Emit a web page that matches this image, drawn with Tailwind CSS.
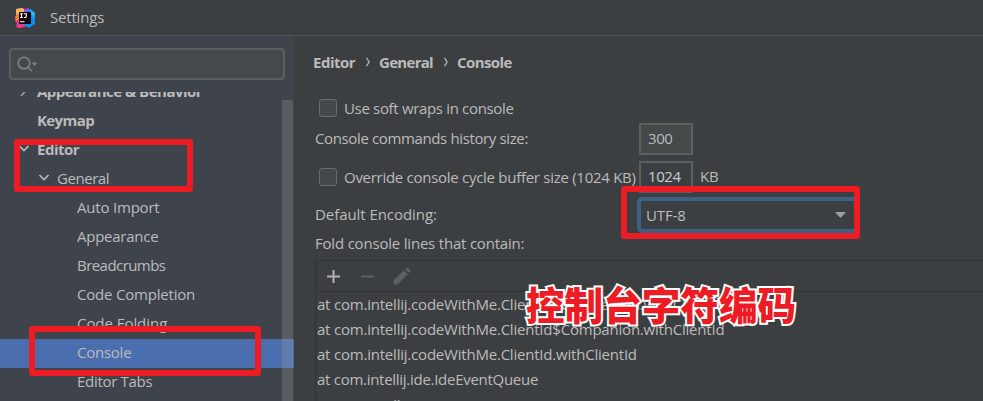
<!DOCTYPE html>
<html lang="en">
<head>
<meta charset="utf-8">
<title>Settings</title>
<script src="https://cdn.jsdelivr.net/npm/@tailwindcss/browser@4"></script>
</head>
<body class="relative flex h-[401px] w-[983px] flex-col overflow-hidden bg-[#3c3f41] font-['Open_Sans','Noto_Sans',sans-serif] text-[15px] leading-[20px] whitespace-nowrap text-[#bbbbbb]">

<header class="flex h-9 shrink-0 items-center border-b border-[#515456] pl-[15px]">
  <svg class="size-5" viewBox="0 0 20 20">
    <path d="M1 1 7 0l5 3-1 12-6 5-3-1 1-5-3-2 2-4Z" fill="#f8578b"/>
    <path d="M1 1 7 0l4 2-5 4-5 1Z" fill="#f5b45c"/>
    <path d="M0 13 4 9l3 7 5 2-6 2-5-1 1-4Z" fill="#e9368f"/>
    <path d="M0 9 3 5l2 6-4 2Z" fill="#f97a32"/>
    <path d="M9 1l5-1 1 4-6 3Z" fill="#9a4be0"/>
    <path d="M12 3l3-2 5 4v11l-6 4-5-3Z" fill="#0d8bf2"/>
    <path d="M15 1l5 4-1 6-3-6Z" fill="#20bdf2"/>
    <path d="M4 4h12v12H4z" fill="#100a0c"/>
    <path d="M5 5.7h3M6.5 5.7v4M5 9.5h3M9 5.7h2.300v2.800q0 1-1 1H9M5 13.800h4.500" fill="none" stroke="#fff" stroke-width="1.100"/>
  </svg>
  <h1 class="ml-[15px] pb-[2px] tracking-[-0.18px]">Settings</h1>
</header>

<main class="flex min-h-0 flex-1">
  <aside class="flex w-[294px] shrink-0 flex-col bg-[#3f434c] pt-3">
    <div class="ml-[9px] flex h-8 w-[276px] shrink-0 items-center rounded-[4px] border-2 border-[#5b5e60] bg-[#45494a] pl-[6px]">
      <svg class="h-4 w-5" viewBox="0 0 20 16" fill="none" stroke="#7b8489" stroke-width="1.500">
        <circle cx="7" cy="7" r="5.800"/><path d="m11 11 4 4.300"/><path d="M14.500 6.500h6L17.500 10Z" fill="#7b8489" stroke="none"/>
      </svg>
    </div>
    <nav class="relative mt-3 flex min-h-0 flex-1 flex-col justify-start overflow-hidden">
      <div class="-mt-[14px] flex h-[29px] shrink-0 items-center pb-1 pl-[19px] font-bold"><svg class="mr-[8px] h-3 w-[10px]" viewBox="0 0 10 12" fill="none" stroke="#a6a9ad" stroke-width="1.500"><path d="m2 1 4.500 5L2 11"/></svg><span class="tracking-[-0.5px]">Appearance &amp; Behavior</span></div>
      <div class="flex h-[29px] shrink-0 items-center pb-1 pl-[37px] font-bold tracking-[-0.6px]">Keymap</div>
      <div class="flex h-[29px] shrink-0 items-center pb-1 pl-[19px] font-bold"><svg class="mr-[8px] h-2 w-[10px]" viewBox="0 0 10 8" fill="none" stroke="#b4b7ba" stroke-width="1.700"><path d="m.5 1 4.500 4.500L9.500 1"/></svg><span class="tracking-[-0.5px]">Editor</span></div>
      <div class="flex h-[29px] shrink-0 items-center pb-1 pl-[39px]"><svg class="mr-[8px] h-2 w-[10px]" viewBox="0 0 10 8" fill="none" stroke="#b4b7ba" stroke-width="1.700"><path d="m.5 1 4.500 4.500L9.500 1"/></svg><span class="tracking-[-0.45px]">General</span></div>
      <div class="flex h-[29px] shrink-0 items-center pb-1 pl-[77px] tracking-[-0.2px]">Auto Import</div>
      <div class="flex h-[29px] shrink-0 items-center pb-1 pl-[77px] tracking-[-0.25px]">Appearance</div>
      <div class="flex h-[29px] shrink-0 items-center pb-1 pl-[77px] tracking-[-0.55px]">Breadcrumbs</div>
      <div class="flex h-[29px] shrink-0 items-center pb-1 pl-[77px] tracking-[-0.2px]">Code Completion</div>
      <div class="flex h-[29px] shrink-0 items-center pb-1 pl-[77px] tracking-[-0.05px]">Code Folding</div>
      <div class="flex h-[29px] shrink-0 items-center bg-[#4b6eaf] pb-1 pl-[77px] tracking-[-0.25px]">Console</div>
      <div class="flex h-[29px] shrink-0 items-center pb-1 pl-[77px] tracking-[-0.3px]">Editor Tabs</div>
      <div class="absolute top-2 right-[1px] bottom-0 w-[11px] bg-[#a6a6a6]/26"></div>
    </nav>
  </aside>

  <section class="flex min-w-0 flex-1 flex-col pl-[21px]">
    <div class="-ml-[2px] mt-4 flex h-5 items-center font-bold">
      <span class="w-[42px] tracking-[-0.5px]">Editor</span>
      <svg class="mr-[9px] ml-[11px] h-[10px] w-[4px]" viewBox="0 0 4 10" fill="none" stroke="#b4b4b4" stroke-width="1.300"><path d="m.5 .8 2.600 4.200L.5 9.200"/></svg>
      <span class="w-[54px] tracking-[-0.7px]">General</span>
      <svg class="mr-[9px] ml-[11px] h-[10px] w-[4px]" viewBox="0 0 4 10" fill="none" stroke="#b4b4b4" stroke-width="1.300"><path d="m.5 .8 2.600 4.200L.5 9.200"/></svg>
      <span class="tracking-[-0.6px]">Console</span>
    </div>

    <div class="mt-[25px] flex h-[22px] items-center pl-[4px]">
      <span class="mr-[7px] size-[18px] rounded-[3px] border-[1.5px] border-[#6b6e6f] bg-[#43494a]"></span>
      <span class="tracking-[-0.33px]">Use soft wraps in console</span>
    </div>
    <div class="mt-1 flex h-8 items-center">
      <span class="w-[324px] pb-[2px] tracking-[-0.37px]">Console commands history size:</span>
      <span class="flex h-8 w-[54px] items-center border-2 border-[#5c5f60] bg-[#45494a] pb-[2px] pl-[7px] tracking-[-0.4px]">300</span>
    </div>
    <div class="mt-[6px] flex h-8 items-center pl-[4px]">
      <span class="mr-[7px] size-[18px] rounded-[3px] border-[1.5px] border-[#6b6e6f] bg-[#43494a]"></span>
      <span class="w-[295px] tracking-[-0.28px]">Override console cycle buffer size (1024 KB)</span>
      <span class="flex h-8 w-[54px] items-center border-2 border-[#5c5f60] bg-[#3c3f41] pb-[2px] pl-[7px] tracking-[-0.4px] text-[#c5cfda]">1024</span>
      <span class="ml-[7px] pb-[2px] tracking-[-0.3px]">KB</span>
    </div>
    <div class="mt-1 flex h-9 items-center">
      <span class="w-[322px] pb-[2px] tracking-[-0.06px]">Default Encoding:</span>
      <div class="flex h-9 w-[221px] items-center justify-between rounded-[5px] border-4 border-[#3d6185] pr-[8px] pl-[5px]">
        <span class="tracking-[-0.1px]">UTF-8</span>
        <svg class="h-[6px] w-[11px]" viewBox="0 0 11 6"><path d="M0 0h11L5.500 6Z" fill="#9da0a2"/></svg>
      </div>
    </div>
    <div class="mt-[1px] flex h-[26px] items-center pb-2 tracking-[-0.2px]">Fold console lines that contain:</div>

    <div class="flex min-h-0 flex-1 flex-col overflow-hidden border-t border-l border-[#313335]">
      <div class="flex h-[31px] shrink-0 items-center border-b border-[#313335] pl-[11px]">
        <svg class="size-[13px]" viewBox="0 0 13 13" stroke="#afb1b3" stroke-width="2"><path d="M6.500 0v13M0 6.500h13"/></svg>
        <svg class="ml-[21px] h-[13px] w-[13px]" viewBox="0 0 13 13" stroke="#5d6061" stroke-width="2"><path d="M0 6.500h13"/></svg>
        <svg class="ml-[19px] size-[18px]" viewBox="0 0 18 18" fill="#5d6061"><path d="M.5 17.500v-4L10.800 3.200l4 4L4.500 17.500ZM12 2l1.500-1.500q.5-.5 1 0l3 3q.5.5 0 1L16 6Z"/></svg>
      </div>
      <div class="flex h-[25px] shrink-0 items-center pb-[2px] pl-px tracking-[-0.21px]">at com.intellij.codeWithMe.ClientId$Companion.withClientId</div>
      <div class="flex h-[25px] shrink-0 items-center pb-[2px] pl-px tracking-[-0.21px]">at com.intellij.codeWithMe.ClientId$Companion.withClientId</div>
      <div class="flex h-[25px] shrink-0 items-center pb-[2px] pl-px tracking-[-0.21px]">at com.intellij.codeWithMe.ClientId.withClientId</div>
      <div class="flex h-[25px] shrink-0 items-center pb-[2px] pl-px tracking-[-0.28px]">at com.intellij.ide.IdeEventQueue</div>
      <div class="flex h-[25px] shrink-0 items-center pl-px tracking-[-0.2px]">at com.intellijU</div>
    </div>
  </section>
</main>

<!-- Annotations drawn over the dialog -->
<div class="absolute top-[139px] left-[14px] h-[53px] w-[179px] rounded-[3px] border-6 border-[#ed1c24]"></div>
<div class="absolute top-[326px] left-[29px] h-[50px] w-[232px] rounded-[3px] border-6 border-[#ed1c24]"></div>
<div class="absolute top-[186px] left-[621px] h-[53px] w-[239px] rounded-[3px] border-6 border-[#ed1c24]"></div>
<div lang="zh-CN" class="absolute top-[283px] left-[526px] font-['Noto_Sans_CJK_SC',sans-serif] text-[38.6px] leading-[40px] font-black text-[#ed1c24] [-webkit-text-stroke:4px_white] [paint-order:stroke_fill]">控制台字符编码</div>
</body>
</html>
